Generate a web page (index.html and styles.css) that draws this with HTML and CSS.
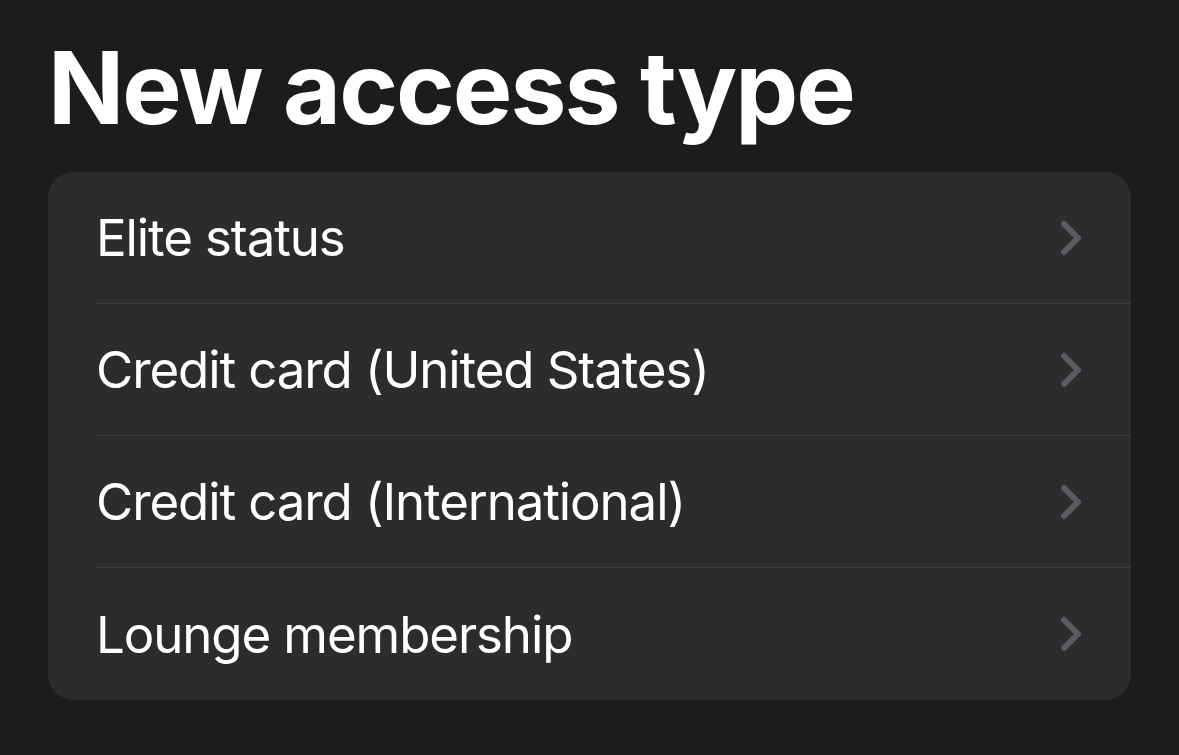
FILE: index.html
```html
<!DOCTYPE html>
<html lang="en">
<head>
<meta charset="utf-8">
<title>New access type</title>
<link rel="stylesheet" href="styles.css">
</head>
<body>
<main class="page">
  <h1 class="title">New access type</h1>
  <ul class="list">
    <li class="row"><div class="row-inner"><span class="label">Elite status</span><svg class="chev" viewBox="0 0 24 36" width="24" height="36"><path d="M4 4 L18 18 L4 32"/></svg></div></li>
    <li class="row"><div class="row-inner"><span class="label">Credit card (United States)</span><svg class="chev" viewBox="0 0 24 36" width="24" height="36"><path d="M4 4 L18 18 L4 32"/></svg></div></li>
    <li class="row"><div class="row-inner"><span class="label">Credit card (International)</span><svg class="chev" viewBox="0 0 24 36" width="24" height="36"><path d="M4 4 L18 18 L4 32"/></svg></div></li>
    <li class="row"><div class="row-inner last"><span class="label">Lounge membership</span><svg class="chev" viewBox="0 0 24 36" width="24" height="36"><path d="M4 4 L18 18 L4 32"/></svg></div></li>
  </ul>
</main>
</body>
</html>
```
FILE: styles.css
```css
html, body {
  margin: 0;
  padding: 0;
  background: #1c1c1e;
  height: 100%;
}
.page {
  padding: 28px 48px 0 48px;
  font-family: Inter, "Noto Sans", "Liberation Sans", sans-serif;
  color: #ffffff;
}
.title {
  margin: 0;
  font-size: 100px;
  line-height: 120px;
  font-weight: 700;
  letter-spacing: -2px;
}
.list {
  list-style: none;
  margin: 24px 0 0 0;
  padding: 0;
  background: #2c2c2e;
  border-radius: 26px;
  overflow: hidden;
}
.row {
  padding-left: 48px;
}
.row-inner {
  height: 131px;
  display: flex;
  align-items: center;
  justify-content: space-between;
  padding-right: 47px;
  border-bottom: 1px solid #3d3d41;
}
.row-inner.last {
  border-bottom: none;
  height: 132px;
}
.label {
  font-size: 51px;
  font-weight: 400;
  letter-spacing: -1.1px;
}
.chev {
  display: block;
}
.chev path {
  fill: none;
  stroke: #5b5b5f;
  stroke-width: 6;
  stroke-linecap: round;
  stroke-linejoin: round;
}
```
